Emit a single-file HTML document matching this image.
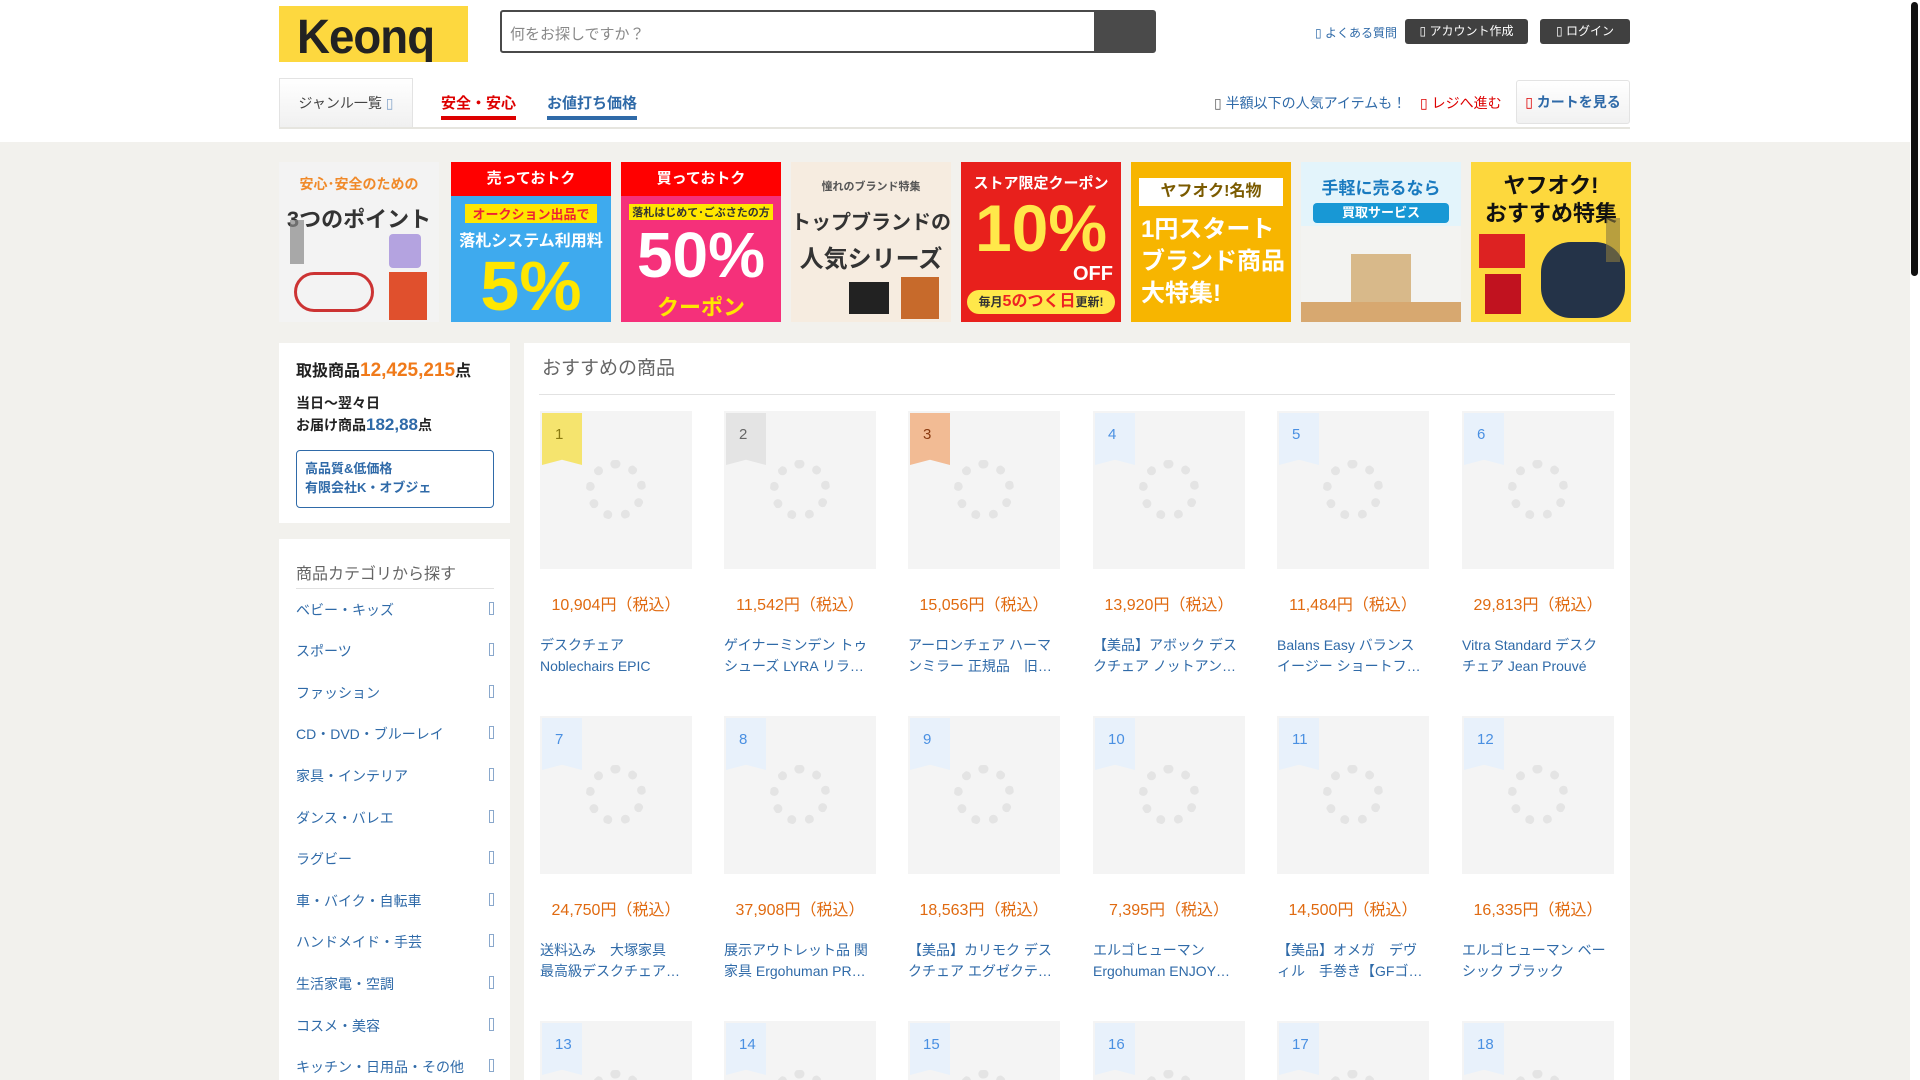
<!DOCTYPE html>
<html><head><meta charset="utf-8"><style>
*{margin:0;padding:0;box-sizing:border-box}
html,body{width:1920px;height:1080px;overflow:hidden}
body{background:#fff;font-family:"Liberation Sans","Noto Sans CJK JP",sans-serif}
#w{position:relative;width:1920px;height:1080px;overflow:hidden}
.a{position:absolute}
.gray{left:0;top:142px;width:1910px;height:938px;background:#f2f1ed}
.logo{left:279px;top:6px;width:189px;height:56px;background:#fdd83f;overflow:hidden}
.logo span{position:absolute;left:18px;top:4px;font:900 48px/56px "Liberation Sans",sans-serif;color:#222;letter-spacing:-1px;transform:scaleX(.95);transform-origin:left}
.search{left:500px;top:10px;width:656px;height:43px;border:2px solid #4a4a4a;border-radius:3px;background:#fff}
.search .ph{position:absolute;left:8px;top:11px;font-size:15px;color:#888}
.search .btn{position:absolute;right:0;top:0;width:60px;height:39px;background:#4a4a4a}
.btn2{background:#404040;color:#fff;font-size:12px;border-radius:3px;text-align:center;line-height:25px;height:25px;top:19px}
.nav{font-size:15px;font-weight:bold}
.panel{background:#fff}
.cat{left:296px;width:198px;font-size:14px;color:#2f6aa8}
.cat i{position:absolute;right:0;top:2px;width:5px;height:13px;border:1px solid #8aa8cc;font-style:normal}
.card{width:152px}
.img{width:152px;height:158px;background:#f4f4f4;position:relative}
.rib{position:absolute;left:2px;top:2px;width:40px;height:52px;font-size:15px;padding:13px 0 0 13px;clip-path:polygon(0 0,100% 0,100% 100%,50% 90%,0 100%)}
.spin{position:absolute;left:46px;top:49px;width:60px;height:60px;border-radius:50%;border:9px dotted #e4e4e4}
.price{font-size:16px;color:#e06a10;text-align:center;position:absolute;top:180px;width:152px}
.name{position:absolute;top:224px;width:152px;font-size:14px;line-height:21px;color:#2f6aa8;white-space:nowrap;overflow:hidden}
.ban{top:162px;width:160px;height:160px;overflow:hidden;text-align:center;font-weight:bold}
</style></head><body><div id="w">
<div class="a gray"></div>
<div class="a logo"><span>Keonq</span></div>
<div class="a search"><div class="ph">何をお探しですか？</div><div class="btn"></div></div>
<div class="a" style="left:1315px;top:24px;font-size:12px;color:#2f6aa8">▯ よくある質問</div>
<div class="a btn2" style="left:1405px;width:123px">▯ アカウント作成</div>
<div class="a btn2" style="left:1540px;width:90px">▯ ログイン</div>
<div class="a" style="left:279px;top:78px;width:134px;height:50px;border:1px solid #e3e3e3;background:linear-gradient(#fff,#f0f0f0);font-size:14px;color:#444;text-align:center;line-height:48px">ジャンル一覧 <span style="color:#8aa8cc">▯</span></div>
<div class="a nav" style="left:441px;top:92px;color:#d00;border-bottom:4px solid #d00;padding-bottom:3px">安全・安心</div>
<div class="a nav" style="left:547px;top:92px;color:#2f6aa8;border-bottom:4px solid #2f6aa8;padding-bottom:3px">お値打ち価格</div>
<div class="a" style="left:1214px;top:93px;font-size:14px;color:#2f6aa8"><span style="color:#666">▯</span> 半額以下の人気アイテムも！</div>
<div class="a" style="left:1420px;top:93px;font-size:14px;color:#d00">▯ レジへ進む</div>
<div class="a" style="left:1516px;top:80px;width:114px;height:44px;border:1px solid #e3e3e3;border-radius:3px;background:linear-gradient(#fff,#f1f1f1);font-size:14px;font-weight:bold;color:#2f6aa8;text-align:center;line-height:42px"><span style="color:#d00;font-weight:normal">▯</span> カートを見る</div>
<div class="a" style="left:279px;top:127px;width:1351px;height:2px;background:#e6e5df"></div>

<div class="a ban" style="left:279px;background:#f3f3f3"><div style="color:#f08a2a;font-size:14px;margin-top:12px">安心･安全のための</div><div style="font-size:22px;color:#333;margin-top:8px;white-space:nowrap">3つのポイント</div><div style="position:absolute;left:110px;top:72px;width:32px;height:34px;background:#b4a3e0;border-radius:4px"></div><div style="position:absolute;left:110px;top:110px;width:38px;height:48px;background:#e0502d"></div><div style="position:absolute;left:15px;top:110px;width:80px;height:40px;border:3px solid #c33;border-radius:20px"></div></div>
<div class="a" style="left:290px;top:220px;width:14px;height:44px;background:#888;opacity:.7"></div>
<div class="a ban" style="left:451px;background:#3eaaee"><div style="background:#f00;color:#fff;font-size:15px;height:34px;line-height:34px">売っておトク</div><div style="background:#ffe600;color:#e23;font-size:13px;margin:8px 14px 0;">オークション出品で</div><div style="color:#fff;font-size:16px;margin-top:4px">落札システム利用料</div><div style="color:#ffe600;font-size:70px;line-height:70px">5%</div></div>
<div class="a ban" style="left:621px;background:#f5307a"><div style="background:#f00;color:#fff;font-size:15px;height:34px;line-height:34px">買っておトク</div><div style="background:#ffe600;color:#333;font-size:11px;margin:8px 8px 0">落札はじめて･ごぶさたの方</div><div style="color:#fff;font-size:64px;line-height:70px">50%</div><div style="color:#ffe600;font-size:22px">クーポン</div></div>
<div class="a ban" style="left:791px;background:#f6ece0"><div style="color:#555;font-size:11px;margin-top:16px">憧れのブランド特集</div><div style="color:#333;font-size:20px;margin-top:12px">トップブランドの</div><div style="color:#333;font-size:24px;margin-top:4px">人気シリーズ</div><div style="position:absolute;left:58px;top:120px;width:40px;height:32px;background:#222"></div><div style="position:absolute;left:110px;top:115px;width:38px;height:42px;background:#c76a2b"></div></div>
<div class="a ban" style="left:961px;background:#e8201c"><div style="color:#fff;font-size:15px;margin-top:10px">ストア限定クーポン</div><div style="color:#ffe84a;font-size:66px;line-height:70px">10%</div><div style="color:#fff;font-size:20px;text-align:right;padding-right:8px">OFF</div><div style="background:#ffe84a;color:#333;font-size:12px;margin:4px 6px;border-radius:12px;line-height:24px">毎月<span style="color:#e22;font-size:16px">5のつく日</span>更新!</div></div>
<div class="a ban" style="left:1131px;background:#f7b500"><div style="background:#fff;color:#7a5a00;font-size:16px;margin:16px 8px 0;line-height:28px">ヤフオク!名物</div><div style="color:#fff;font-size:24px;line-height:32px;text-align:left;padding-left:10px;margin-top:8px">1円スタート<br>ブランド商品<br>大特集!</div></div>
<div class="a ban" style="left:1301px;background:#f3f3f1"><div style="background:#e3f4fb;height:64px;padding-top:12px"><div style="color:#1a7bc0;font-size:17px">手軽に売るなら</div><div style="background:#1898d5;color:#fff;font-size:13px;margin:4px 12px;border-radius:4px;line-height:20px">買取サービス</div></div><div style="position:absolute;left:50px;top:92px;width:60px;height:48px;background:#d8b98a"></div><div style="position:absolute;left:0;top:140px;width:160px;height:20px;background:#d7a870"></div></div>
<div class="a ban" style="left:1471px;background:#fdd83d"><div style="color:#111;font-size:22px;line-height:28px;margin-top:10px">ヤフオク!<br>おすすめ特集</div><div style="position:absolute;left:8px;top:72px;width:46px;height:34px;background:#d22"></div><div style="position:absolute;left:70px;top:80px;width:84px;height:76px;background:#243348;border-radius:30px"></div><div style="position:absolute;left:14px;top:112px;width:36px;height:40px;background:#c1121f"></div></div>
<div class="a" style="left:1606px;top:218px;width:14px;height:44px;background:#8a7a40;opacity:.6"></div>

<div class="a panel" style="left:279px;top:343px;width:231px;height:180px"></div>
<div class="a" style="left:296px;top:357px;font-size:16px;font-weight:bold;color:#222">取扱商品<span style="color:#f07a1a;font-size:19px">12,425,215</span>点</div>
<div class="a" style="left:296px;top:393px;font-size:14px;font-weight:bold;color:#222;line-height:21px">当日〜翌々日<br>お届け商品<span style="color:#2f6aa8;font-size:17px">182,88</span>点</div>
<div class="a" style="left:296px;top:450px;width:198px;height:58px;border:1px solid #2f6aa8;border-radius:4px;padding:8px 8px;font-size:13px;font-weight:bold;color:#2f6aa8;line-height:19px">高品質&amp;低価格<br>有限会社K・オブジェ</div>
<div class="a panel" style="left:279px;top:539px;width:231px;height:541px"></div>
<div class="a" style="left:296px;top:560px;font-size:16px;color:#666">商品カテゴリから探す</div>
<div class="a" style="left:296px;top:588px;width:198px;height:1px;background:#e2e2e2"></div>
<div class="a cat" style="top:600px">ベビー・キッズ<i></i></div>
<div class="a cat" style="top:641px">スポーツ<i></i></div>
<div class="a cat" style="top:683px">ファッション<i></i></div>
<div class="a cat" style="top:724px">CD・DVD・ブルーレイ<i></i></div>
<div class="a cat" style="top:766px">家具・インテリア<i></i></div>
<div class="a cat" style="top:808px">ダンス・バレエ<i></i></div>
<div class="a cat" style="top:849px">ラグビー<i></i></div>
<div class="a cat" style="top:891px">車・バイク・自転車<i></i></div>
<div class="a cat" style="top:932px">ハンドメイド・手芸<i></i></div>
<div class="a cat" style="top:974px">生活家電・空調<i></i></div>
<div class="a cat" style="top:1016px">コスメ・美容<i></i></div>
<div class="a cat" style="top:1057px">キッチン・日用品・その他<i></i></div>

<div class="a panel" style="left:524px;top:343px;width:1106px;height:737px"></div>
<div class="a" style="left:542px;top:353px;font-size:19px;color:#666">おすすめの商品</div>
<div class="a" style="left:539px;top:394px;width:1076px;height:1px;background:#e2e2e2"></div>

<div class="a card" style="left:540px;top:411px"><div class="img"><div class="rib" style="background:#f5e46e;color:#8a7a10">1</div><div class="spin"></div></div><div class="price">10,904円（税込）</div><div class="name">デスクチェア<br>Noblechairs EPIC</div></div>
<div class="a card" style="left:724px;top:411px"><div class="img"><div class="rib" style="background:#e4e4e4;color:#666">2</div><div class="spin"></div></div><div class="price">11,542円（税込）</div><div class="name">ゲイナーミンデン トゥ<br>シューズ LYRA リラ…</div></div>
<div class="a card" style="left:908px;top:411px"><div class="img"><div class="rib" style="background:#f2bb94;color:#8a3a10">3</div><div class="spin"></div></div><div class="price">15,056円（税込）</div><div class="name">アーロンチェア ハーマ<br>ンミラー 正規品　旧…</div></div>
<div class="a card" style="left:1093px;top:411px"><div class="img"><div class="rib" style="background:#e8f1fb;color:#4a90e2">4</div><div class="spin"></div></div><div class="price">13,920円（税込）</div><div class="name">【美品】アボック デス<br>クチェア ノットアン…</div></div>
<div class="a card" style="left:1277px;top:411px"><div class="img"><div class="rib" style="background:#e8f1fb;color:#4a90e2">5</div><div class="spin"></div></div><div class="price">11,484円（税込）</div><div class="name">Balans Easy バランス<br>イージー ショートフ…</div></div>
<div class="a card" style="left:1462px;top:411px"><div class="img"><div class="rib" style="background:#e8f1fb;color:#4a90e2">6</div><div class="spin"></div></div><div class="price">29,813円（税込）</div><div class="name">Vitra Standard デスク<br>チェア Jean Prouvé</div></div>

<div class="a card" style="left:540px;top:716px"><div class="img"><div class="rib" style="background:#e8f1fb;color:#4a90e2">7</div><div class="spin"></div></div><div class="price">24,750円（税込）</div><div class="name">送料込み　大塚家具<br>最高級デスクチェア…</div></div>
<div class="a card" style="left:724px;top:716px"><div class="img"><div class="rib" style="background:#e8f1fb;color:#4a90e2">8</div><div class="spin"></div></div><div class="price">37,908円（税込）</div><div class="name">展示アウトレット品 関<br>家具 Ergohuman PR…</div></div>
<div class="a card" style="left:908px;top:716px"><div class="img"><div class="rib" style="background:#e8f1fb;color:#4a90e2">9</div><div class="spin"></div></div><div class="price">18,563円（税込）</div><div class="name">【美品】カリモク デス<br>クチェア エグゼクテ…</div></div>
<div class="a card" style="left:1093px;top:716px"><div class="img"><div class="rib" style="background:#e8f1fb;color:#4a90e2">10</div><div class="spin"></div></div><div class="price">7,395円（税込）</div><div class="name">エルゴヒューマン<br>Ergohuman ENJOY…</div></div>
<div class="a card" style="left:1277px;top:716px"><div class="img"><div class="rib" style="background:#e8f1fb;color:#4a90e2">11</div><div class="spin"></div></div><div class="price">14,500円（税込）</div><div class="name">【美品】オメガ　デヴ<br>ィル　手巻き【GFゴ…</div></div>
<div class="a card" style="left:1462px;top:716px"><div class="img"><div class="rib" style="background:#e8f1fb;color:#4a90e2">12</div><div class="spin"></div></div><div class="price">16,335円（税込）</div><div class="name">エルゴヒューマン ベー<br>シック ブラック</div></div>

<div class="a card" style="left:540px;top:1021px"><div class="img"><div class="rib" style="background:#e8f1fb;color:#4a90e2">13</div><div class="spin"></div></div></div>
<div class="a card" style="left:724px;top:1021px"><div class="img"><div class="rib" style="background:#e8f1fb;color:#4a90e2">14</div><div class="spin"></div></div></div>
<div class="a card" style="left:908px;top:1021px"><div class="img"><div class="rib" style="background:#e8f1fb;color:#4a90e2">15</div><div class="spin"></div></div></div>
<div class="a card" style="left:1093px;top:1021px"><div class="img"><div class="rib" style="background:#e8f1fb;color:#4a90e2">16</div><div class="spin"></div></div></div>
<div class="a card" style="left:1277px;top:1021px"><div class="img"><div class="rib" style="background:#e8f1fb;color:#4a90e2">17</div><div class="spin"></div></div></div>
<div class="a card" style="left:1462px;top:1021px"><div class="img"><div class="rib" style="background:#e8f1fb;color:#4a90e2">18</div><div class="spin"></div></div></div>

<div class="a" style="left:1910px;top:0;width:10px;height:1080px;background:#fff"></div>
<div class="a" style="left:1911px;top:2px;width:7px;height:274px;background:#111;border-radius:4px"></div>
</div></body></html>
